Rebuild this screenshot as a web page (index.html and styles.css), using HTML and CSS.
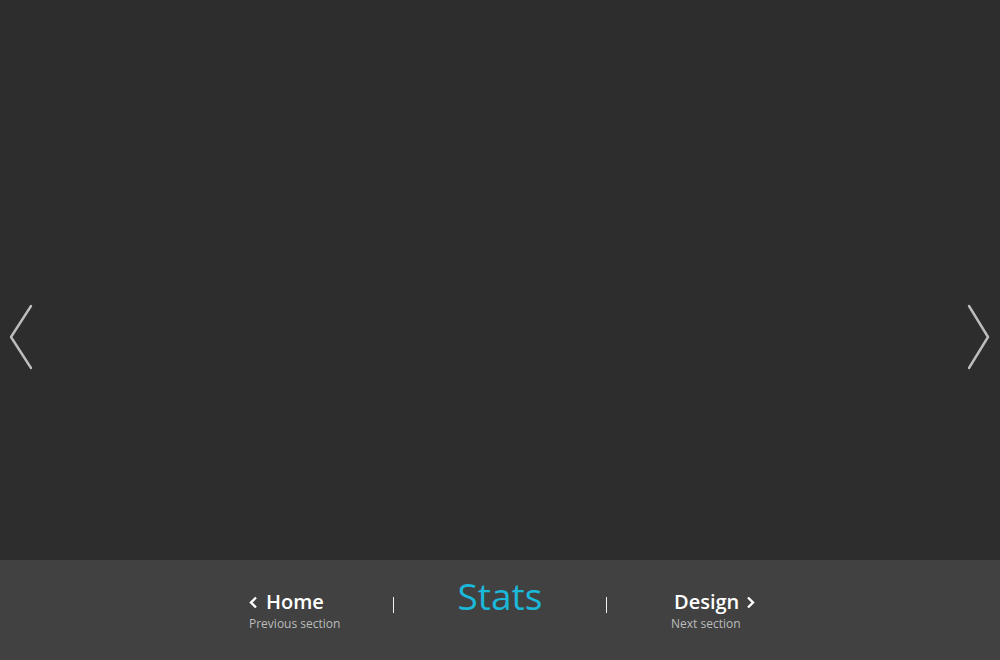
FILE: index.html
```html
<!DOCTYPE html>
<html lang="en">
<head>
<meta charset="utf-8">
<title>Stats</title>
<link rel="stylesheet" href="styles.css">
</head>
<body>
<div class="page">
  <main class="stage">
    <a class="arrow arrow-left" href="#" aria-label="Previous">
      <svg width="26" height="68" viewBox="0 0 26 68"><polyline points="22,3 2,34 22,65" fill="none" stroke="#bdbdbd" stroke-width="2.4" stroke-linecap="round" stroke-linejoin="round"/></svg>
    </a>
    <a class="arrow arrow-right" href="#" aria-label="Next">
      <svg width="26" height="68" viewBox="0 0 26 68"><polyline points="4,3 23,34 4,65" fill="none" stroke="#bdbdbd" stroke-width="2.4" stroke-linecap="round" stroke-linejoin="round"/></svg>
    </a>
  </main>
  <footer class="nav">
    <a class="section prev" href="#">
      <span class="title"><svg class="chev chev-left" width="9" height="13" viewBox="0 0 9 13"><polyline points="7,1.5 2,6.5 7,11.5" fill="none" stroke="#fff" stroke-width="2.4"/></svg>Home</span>
      <span class="sub">Previous section</span>
    </a>
    <span class="sep"></span>
    <div class="current">Stats</div>
    <span class="sep"></span>
    <a class="section next" href="#">
      <span class="title">Design<svg class="chev chev-right" width="9" height="13" viewBox="0 0 9 13"><polyline points="2,1.5 7,6.5 2,11.5" fill="none" stroke="#fff" stroke-width="2.4"/></svg></span>
      <span class="sub">Next section</span>
    </a>
  </footer>
</div>
</body>
</html>
```
FILE: styles.css
```css
* { box-sizing: border-box; }
html, body { margin: 0; padding: 0; }
body {
  width: 1000px;
  height: 660px;
  overflow: hidden;
  background: #2d2d2d;
  font-family: "Open Sans", "Liberation Sans", sans-serif;
}
.page {
  display: flex;
  flex-direction: column;
  height: 660px;
}
.stage {
  position: relative;
  height: 560px;
  background: #2d2d2d;
}
.arrow {
  position: absolute;
  top: 303px;
  display: block;
  line-height: 0;
}
.arrow-left { left: 9px; }
.arrow-right { left: 965px; }

.nav {
  height: 100px;
  background: #414141;
  display: flex;
  align-items: flex-start;
  padding: 16px 0 0 249px;
}
.section {
  display: flex;
  flex-direction: column;
  text-decoration: none;
  margin-top: 14px;
}
.prev { width: 144px; }
.next { padding-left: 64px; }
.title {
  display: flex;
  align-items: center;
  color: #fff;
  font-size: 20px;
  font-weight: 600;
  line-height: 24px;
}
.chev { display: block; margin-top: 1px; }
.chev-left { margin-right: 8px; }
.chev-right { margin-left: 7px; }
.next .title { padding-left: 3px; }
.sub {
  color: #bcbcbc;
  font-size: 12px;
  line-height: 16px;
  margin-top: 2px;
}
.sep {
  width: 1px;
  height: 16px;
  background: #f2f2f2;
  margin-top: 21px;
}
.current {
  width: 212px;
  text-align: center;
  color: #1ab8da;
  font-size: 37px;
  line-height: 40px;
  font-weight: 400;
}
```
